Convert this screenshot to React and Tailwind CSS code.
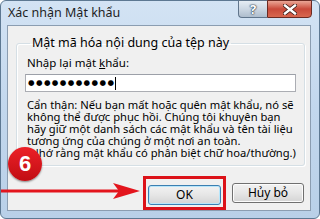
import React from "react";

export default function App() {
  return (
    <div className="w-[320px] h-[219px] overflow-hidden bg-white">
      <div className="relative w-[320px] h-[219px] flex flex-col rounded-[6px] border border-[#5d7892] bg-gradient-to-b from-[#d3e3f4] via-[#c2d7ed] to-[#b9d0e8] font-['Noto_Sans',sans-serif] text-black">
        {/* title bar */}
        <div className="h-[24px] flex items-start shrink-0">
          <span className="pl-[7px] pt-[4px] text-[12.5px] leading-[16px] text-[#1e1e1e] whitespace-nowrap">
            Xác nhận Mật khẩu
          </span>
          <div className="flex-1" />
          <div className="w-[29px] h-[18px] -mt-px flex items-center justify-center rounded-bl-[4px] border border-[#60758c] border-r-0 bg-gradient-to-b from-[#e6edf4] via-[#ccd7e3] to-[#aebdcd]">
            <span className="text-[13px] font-bold leading-none text-white [text-shadow:0_0_1px_#2b3d52,0_0_1px_#2b3d52,0_0_2px_#2b3d52]">
              ?
            </span>
          </div>
          <div className="w-[45px] h-[18px] -mt-px flex items-center justify-center rounded-br-[4px] border border-[#6b2a22] bg-gradient-to-b from-[#eaa596] via-[#c9493a] to-[#d8674f]">
            <svg width="14" height="11" viewBox="0 0 14 11">
              <path d="M2 1.5 L12 9.5 M12 1.5 L2 9.5" stroke="#3a1a16" strokeWidth="4" strokeLinecap="square" />
              <path d="M2 1.5 L12 9.5 M12 1.5 L2 9.5" stroke="#ffffff" strokeWidth="2.4" strokeLinecap="square" />
            </svg>
          </div>
          <div className="w-[7px]" />
        </div>

        {/* client area */}
        <div className="ml-[6px] mr-[8px] mb-[7px] flex-1 flex flex-col border border-[#8b9db1] bg-[#f0f0f0]">
          <fieldset className="mt-[10px] ml-[8px] mr-[6px] border border-[#d5dfe5] rounded-[3px] pl-[8px] pr-[8px] pb-[6px] shadow-[inset_1px_1px_0_#fff,1px_1px_0_#fff]">
            <legend className="ml-[5px] px-[2px] text-[12.5px] leading-[14px] whitespace-nowrap">
              Mật mã hóa nội dung của tệp này
            </legend>
            <div className="mt-[6px] ml-[2px] text-[11.5px] leading-[14px] whitespace-nowrap">
              Nhập lại mật <span className="underline">k</span>hẩu:
            </div>
            <div className="mt-[4px] h-[18px] flex items-center border border-[#abadb3] border-t-[#9ca0a8] bg-white pl-[2px]">
              <span className="text-[7.5px] leading-none tracking-[1.4px] font-['DejaVu_Sans',sans-serif]">
                ●●●●●●●●●●●
              </span>
              <span className="w-px h-[13px] bg-black" />
            </div>
            <div className="mt-[7px] ml-[2px] text-[11.2px] leading-[12px] whitespace-nowrap">
              <div>Cẩn thận: Nếu bạn mất hoặc quên mật khẩu, nó sẽ</div>
              <div>không thể được phục hồi. Chúng tôi khuyên bạn</div>
              <div>hãy giữ một danh sách các mật khẩu và tên tài liệu</div>
              <div>tương ứng của chúng ở một nơi an toàn.</div>
              <div>(Nhớ rằng mật khẩu có phân biệt chữ hoa/thường.)</div>
            </div>
          </fieldset>

          <div className="mt-[10px] pr-[6px] flex justify-end items-center gap-[6px]">
            <div className="border-[3px] border-[#dc1219] p-[2px]">
              <button className="w-[73px] h-[20px] rounded-[3px] border border-[#3c7fb1] bg-gradient-to-b from-[#f2f2f2] via-[#e6e6e6] to-[#d4d4d4] shadow-[inset_0_0_0_1px_#b7e6fb] text-[12px] leading-none">
                OK
              </button>
            </div>
            <button className="w-[72px] h-[20px] rounded-[3px] border border-[#707070] bg-gradient-to-b from-[#f2f2f2] via-[#e6e6e6] to-[#d4d4d4] shadow-[inset_0_0_0_1px_#fcfcfc] text-[12px] leading-none">
              Hủy bỏ
            </button>
          </div>
        </div>

        {/* annotations */}
        <div className="absolute left-[7px] top-[146px] w-[34px] h-[34px] rounded-full bg-gradient-to-b from-[#ec2027] to-[#c10d13] shadow-[0_1px_2px_rgba(0,0,0,0.45)] flex items-center justify-center">
          <span className="text-white font-bold text-[22px] leading-none font-['Liberation_Sans',sans-serif]">6</span>
        </div>
        <svg className="absolute left-0 top-[181px]" width="142" height="18" viewBox="0 0 142 18">
          <rect x="0" y="7.5" width="118" height="3" fill="#e3151d" />
          <path d="M112 1 L139 9 L112 17 L118 9 Z" fill="#e3151d" />
        </svg>
      </div>
    </div>
  );
}
